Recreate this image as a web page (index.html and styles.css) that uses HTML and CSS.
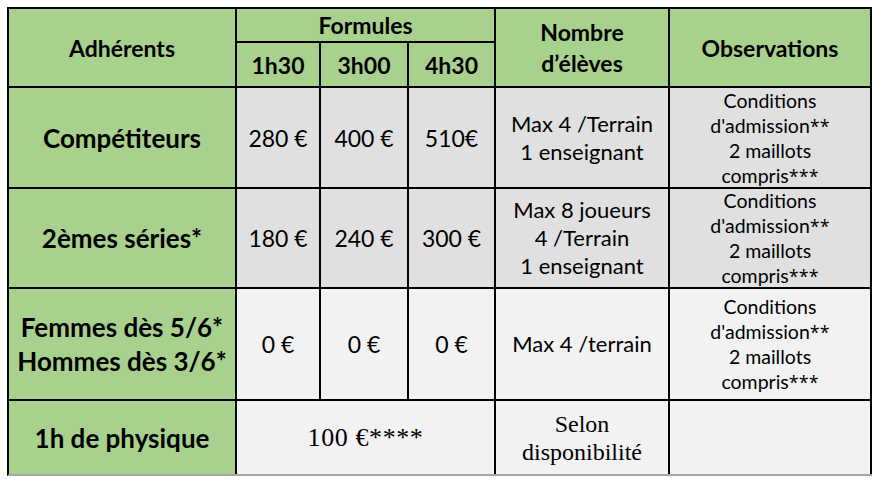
FILE: index.html
```html
<!DOCTYPE html>
<html lang="fr">
<head>
<meta charset="utf-8">
<title>Tarifs</title>
<link rel="stylesheet" href="styles.css">
</head>
<body>
<div class="page">
  <div class="sheet">
    <div class="c green hd r2">Adhérents</div>
    <div class="c green hd span3">Formules</div>
    <div class="c green hd r2 tall">Nombre<br>d’élèves</div>
    <div class="c green hd r2">Observations</div>
    <div class="c green hd">1h30</div>
    <div class="c green hd">3h00</div>
    <div class="c green hd">4h30</div>

    <div class="c green lbl">Compétiteurs</div>
    <div class="c dark price">280 €</div>
    <div class="c dark price">400 €</div>
    <div class="c dark price">510€</div>
    <div class="c dark num">Max 4 /Terrain<br>1 enseignant</div>
    <div class="c dark obs"><p class="txt">Conditions<br>d'admission<span class="ast">**</span><br>2 maillots<br>compris<span class="ast">***</span></p></div>

    <div class="c green lbl">2èmes séries*</div>
    <div class="c dark price">180 €</div>
    <div class="c dark price">240 €</div>
    <div class="c dark price">300 €</div>
    <div class="c dark num">Max 8 joueurs<br>4 /Terrain<br>1 enseignant</div>
    <div class="c dark obs"><p class="txt">Conditions<br>d'admission<span class="ast">**</span><br>2 maillots<br>compris<span class="ast">***</span></p></div>

    <div class="c green lbl two">Femmes dès 5/6*<br>Hommes dès 3/6*</div>
    <div class="c light price">0 €</div>
    <div class="c light price">0 €</div>
    <div class="c light price">0 €</div>
    <div class="c light num">Max 4 /terrain</div>
    <div class="c light obs"><p class="txt">Conditions<br>d'admission<span class="ast">**</span><br>2 maillots<br>compris<span class="ast">***</span></p></div>

    <div class="c green lbl last">1h de physique</div>
    <div class="c light serif big span3 last">100 €****</div>
    <div class="c light serif last">Selon<br>disponibilité</div>
    <div class="c light last"></div>
  </div>
</div>
</body>
</html>
```

FILE: styles.css
```css
html, body {
  margin: 0;
  padding: 0;
  background: #ffffff;
}

.page {
  padding: 7px 0 0 7px;
}

.sheet {
  display: grid;
  grid-template-columns: 228px 84px 88px 87px 174px 202px;
  grid-template-rows: 34px 45px 101px 100px 112px 73px;
  width: 863px;
  border-left: 2px solid #000;
  border-top: 2px solid #000;
  border-bottom: 2px solid #a8a8a8;
  font-family: Lato, "Liberation Sans", sans-serif;
  color: #000;
}

.c {
  box-sizing: border-box;
  border-right: 2px solid #000;
  border-bottom: 2px solid #000;
  display: flex;
  align-items: center;
  justify-content: center;
  text-align: center;
}

.c.last {
  border-bottom: none;
}

.txt {
  margin: 0;
}

.r2 { grid-row: span 2; }
.span3 { grid-column: span 3; }

.green { background: #a9d18e; }
.dark { background: #e0e0e0; }
.light { background: #f2f2f2; }

.hd {
  font-weight: 700;
  font-size: 23px;
  line-height: 26px;
}

.hd.tall {
  line-height: 31px;
}

.lbl {
  font-weight: 700;
  font-size: 26px;
  line-height: 32px;
}

.lbl.two {
  line-height: 34px;
}

.price {
  font-size: 23px;
  line-height: 28px;
}

.num {
  font-size: 22px;
  line-height: 28px;
}

.obs {
  font-size: 19.5px;
  line-height: 25px;
}

.ast {
  font-family: "Open Sans", "Noto Sans", sans-serif;
  font-size: 18px;
  line-height: 1;
}

.serif {
  font-family: "Liberation Serif", "Times New Roman", serif;
  font-size: 24px;
  line-height: 28px;
}

.serif.big {
  font-size: 26px;
  letter-spacing: 0.6px;
}
```
